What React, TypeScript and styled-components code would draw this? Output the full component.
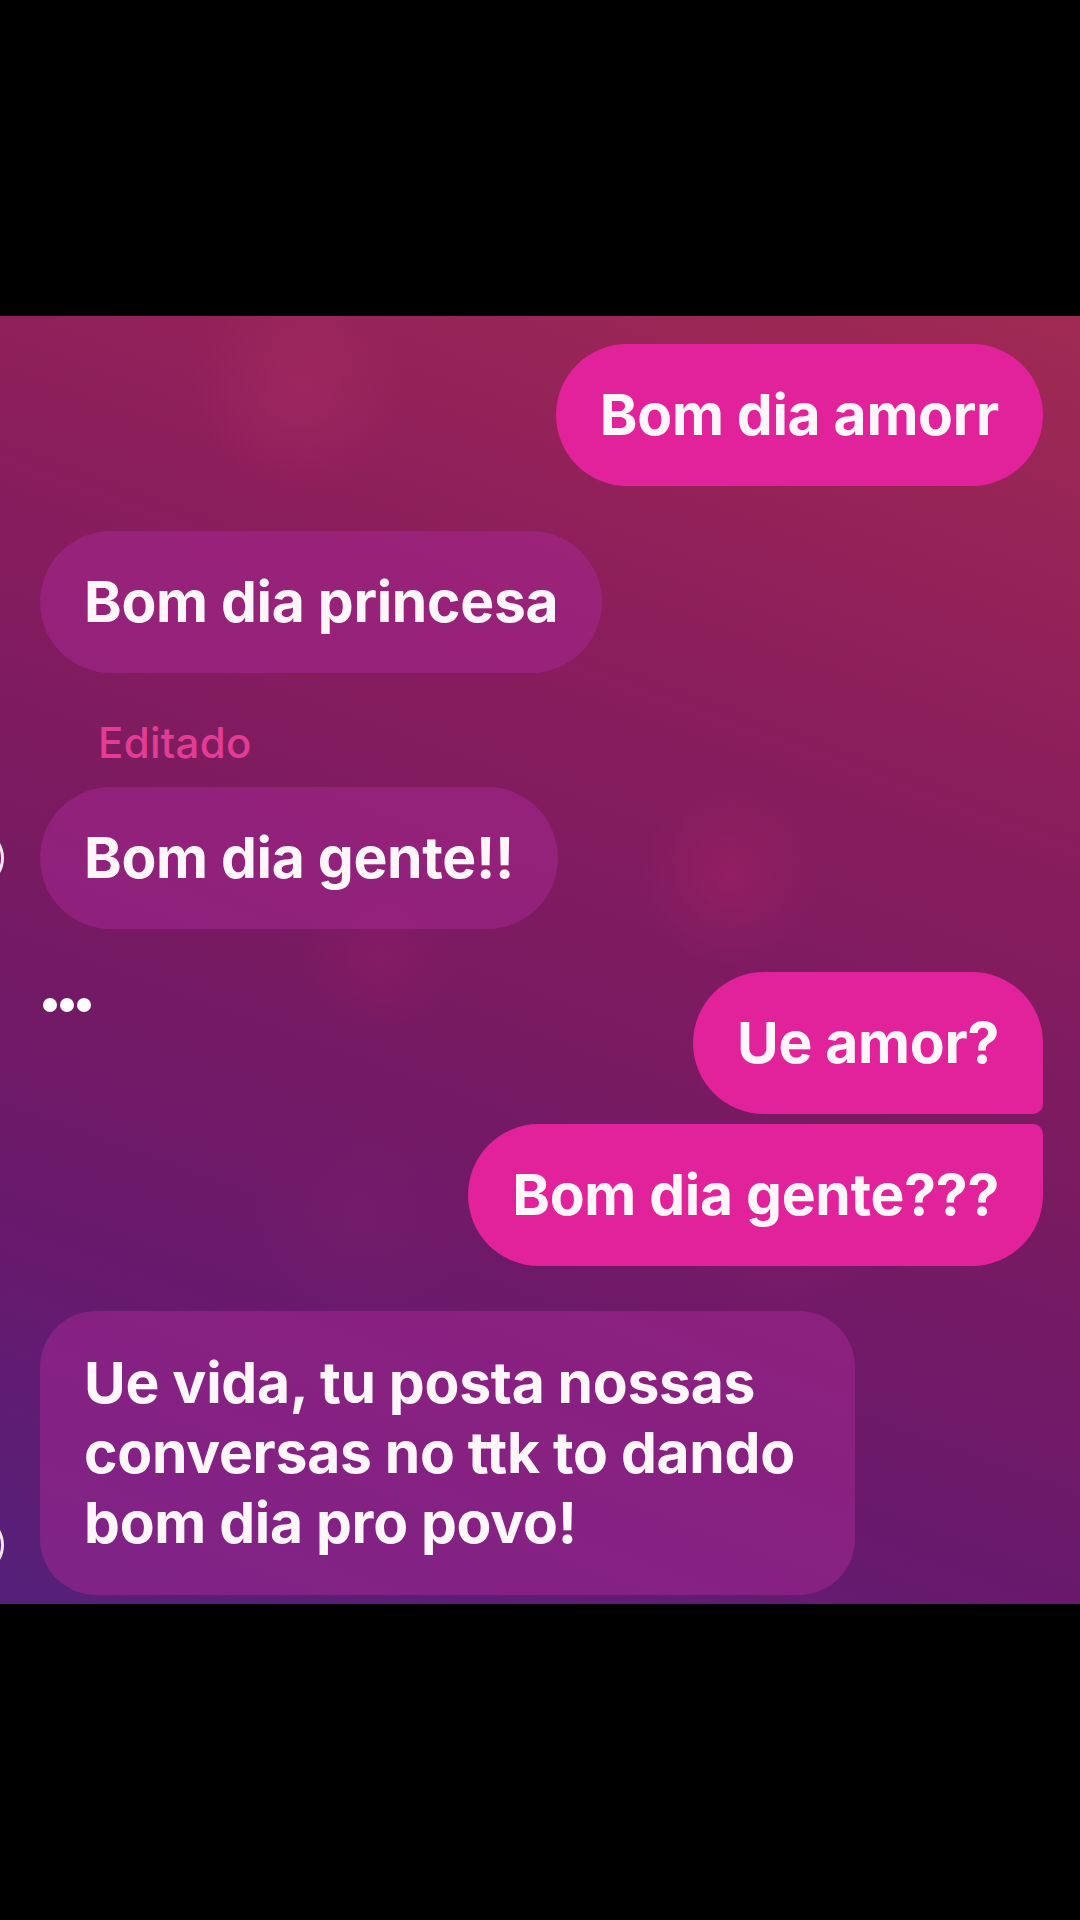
import styled, { createGlobalStyle } from "styled-components";

const GlobalStyle = createGlobalStyle`
  html, body {
    margin: 0;
    padding: 0;
    background: #000;
  }
  body {
    font-family: Inter, "Noto Sans", sans-serif;
  }
`;

const Screen = styled.div`
  width: 1080px;
  height: 1920px;
  background: #000;
  display: flex;
  flex-direction: column;
  padding-top: 316px;
  box-sizing: border-box;
  overflow: hidden;
`;

const Chat = styled.div`
  position: relative;
  height: 1288px;
  background:
    radial-gradient(circle at 300px 70px, rgba(190, 50, 110, 0.3), transparent 110px),
    radial-gradient(circle at 730px 560px, rgba(200, 40, 110, 0.22), transparent 90px),
    radial-gradient(circle at 380px 640px, rgba(170, 30, 110, 0.22), transparent 80px),
    radial-gradient(circle at 780px 900px, rgba(160, 40, 120, 0.18), transparent 110px),
    radial-gradient(circle at 360px 900px, rgba(140, 40, 120, 0.18), transparent 110px),
    linear-gradient(200deg, #a02a52 0%, #8a1d5c 30%, #781a62 55%, #6a196c 75%, #55207a 100%);
  display: flex;
  flex-direction: column;
  padding: 28px 37px 0 40px;
  box-sizing: border-box;
`;

const Row = styled.div<{ $out?: boolean; $gap: number }>`
  position: relative;
  display: flex;
  justify-content: ${(p) => (p.$out ? "flex-end" : "flex-start")};
  margin-top: ${(p) => p.$gap}px;
`;

const Bubble = styled.div<{
  $out?: boolean;
  $tr?: number;
  $br?: number;
  $radius?: number;
  $minWidth?: number;
}>`
  font-size: 57px;
  font-weight: 700;
  line-height: 70px;
  color: #fff6fa;
  letter-spacing: -0.3px;
  white-space: pre-line;
  padding: ${(p) => (p.$radius ? "37px 44px" : "36px 44px")};
  min-width: ${(p) => (p.$minWidth ? `${p.$minWidth}px` : "0")};
  box-sizing: border-box;
  background: ${(p) => (p.$out ? "#e2229a" : "rgba(168, 40, 150, 0.5)")};
  border-radius: ${(p) => p.$radius ?? 71}px;
  border-top-right-radius: ${(p) => p.$tr ?? p.$radius ?? 71}px;
  border-bottom-right-radius: ${(p) => p.$br ?? p.$radius ?? 71}px;
`;

const Edited = styled.div`
  margin: 45px 0 0 58px;
  font-size: 42px;
  line-height: 50px;
  color: #e23c95;
  font-weight: 500;
  letter-spacing: 0.3px;
`;

const Avatar = styled.div<{ $bottom?: boolean }>`
  position: absolute;
  left: -96px;
  top: ${(p) => (p.$bottom ? "auto" : "50%")};
  bottom: ${(p) => (p.$bottom ? "20px" : "auto")};
  width: 60px;
  height: 60px;
  margin-top: ${(p) => (p.$bottom ? "0" : "-30px")};
  border-radius: 50%;
  border: 3px solid #f3e6ef;
  box-sizing: border-box;
`;

const Typing = styled.div`
  display: flex;
  gap: 3px;
  align-self: flex-start;
  margin-top: 26px;
  margin-left: 3px;
`;

const Dot = styled.span`
  width: 14px;
  height: 14px;
  border-radius: 50%;
  background: #fff;
`;

const SplitRow = styled.div`
  display: flex;
  justify-content: space-between;
  margin-top: 43px;
`;

export default function App() {
  return (
    <>
      <GlobalStyle />
      <Screen>
        <Chat>
          <Row $out $gap={0}>
            <Bubble $out>Bom dia amorr</Bubble>
          </Row>
          <Row $gap={45}>
            <Bubble>Bom dia princesa</Bubble>
          </Row>
          <Edited>Editado</Edited>
          <Row $gap={19}>
            <Avatar />
            <Bubble>Bom dia gente!!</Bubble>
          </Row>
          <SplitRow>
            <Typing>
              <Dot />
              <Dot />
              <Dot />
            </Typing>
            <Bubble $out $br={10}>
              Ue amor?
            </Bubble>
          </SplitRow>
          <Row $out $gap={10}>
            <Bubble $out $tr={10}>
              Bom dia gente???
            </Bubble>
          </Row>
          <Row $gap={45}>
            <Avatar $bottom />
            <Bubble $radius={56} $minWidth={815}>
              {"Ue vida, tu posta nossas\nconversas no ttk to dando\nbom dia pro povo!"}
            </Bubble>
          </Row>
        </Chat>
      </Screen>
    </>
  );
}
